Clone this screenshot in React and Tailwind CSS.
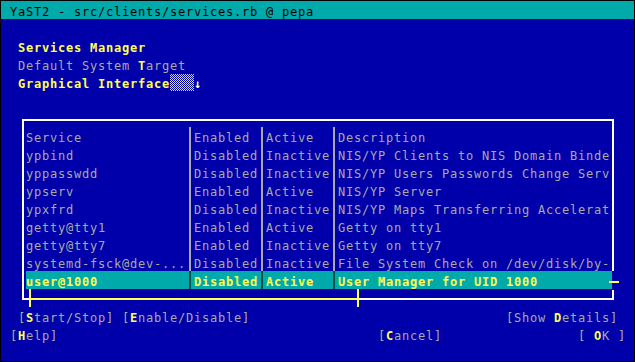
import React from "react";

const Y = "text-[#ffff55] font-bold";
const G = "text-[#aaaaaa]";

const rows = [
  ["Service", "Enabled", "Active", "Description"],
  ["ypbind", "Disabled", "Inactive", "NIS/YP Clients to NIS Domain Binde"],
  ["yppasswdd", "Disabled", "Inactive", "NIS/YP Users Passwords Change Serv"],
  ["ypserv", "Enabled", "Active", "NIS/YP Server"],
  ["ypxfrd", "Disabled", "Inactive", "NIS/YP Maps Transferring Accelerat"],
  ["getty@tty1", "Enabled", "Active", "Getty on tty1"],
  ["getty@tty7", "Enabled", "Inactive", "Getty on tty7"],
  ["systemd-fsck@dev-...", "Disabled", "Inactive", "File System Check on /dev/disk/by-"],
  ["user@1000", "Disabled", "Active", "User Manager for UID 1000"],
];

function Sep({ sel }) {
  return (
    <div className="w-[8px] h-[18px] flex">
      <div className={sel ? "ml-[3px] w-[2px] h-full bg-[#004a4a]" : "ml-[3px] w-[2px] h-full bg-[#aaaaaa]"} />
    </div>
  );
}

function Row({ cells, sel }) {
  const txt = sel ? Y : G;
  return (
    <div className={sel ? "flex h-[18px] leading-[22px] whitespace-pre bg-[#00aaaa]" : "flex h-[18px] leading-[22px] whitespace-pre"}>
      <div className={"w-[160px] " + txt}>{cells[0]}</div>
      <Sep sel={sel} />
      <div className={"w-[64px] " + txt}>{cells[1]}</div>
      <Sep sel={sel} />
      <div className={"w-[64px] " + txt}>{cells[2]}</div>
      <Sep sel={sel} />
      <div className={"w-[272px] " + txt}>{cells[3]}</div>
    </div>
  );
}

export default function App() {
  return (
    <div className="w-[635px] h-[362px] bg-black pt-[1px] pl-[1px] font-['DejaVu_Sans_Mono',monospace] text-[12px] tracking-[0.776px]">
      <div className="w-[633px] h-[360px] bg-[#0000aa] flex flex-col">
        {/* title */}
        <div className="h-[18px] leading-[22px] bg-[#00aaaa] text-black pl-[9px] whitespace-pre">
          YaST2 - src/clients/services.rb @ pepa
        </div>
        <div className="h-[18px]" />
        <div className={"h-[18px] leading-[22px] pl-[17px] whitespace-pre " + Y}>Services Manager</div>
        <div className="h-[18px] leading-[22px] pl-[17px] whitespace-pre flex">
          <span className={G}>Default System </span>
          <span className={Y}>T</span>
          <span className={G}>arget</span>
        </div>
        <div className="h-[18px] leading-[22px] pl-[17px] whitespace-pre flex items-start">
          <span className={Y}>Graphical Interface</span>
          <div className="w-[24px] h-[17px] mt-[1px] bg-[repeating-conic-gradient(#d8d8e8_0_25%,#0000aa_0_50%)] bg-[length:2px_2px]" />
          <span className="text-[#ffffcc] font-bold">↓</span>
        </div>
        <div className="h-[18px]" />

        {/* frame with table */}
        <div className="h-[198px] pt-[10px] pl-[21px]">
          <div className="relative w-[592px] h-[181px] flex flex-col">
            <div className="h-[2px] bg-white" />
            <div className="flex h-[177px]">
              <div className="w-[2px] bg-white" />
              <div className="w-[588px] pt-[6px] pl-[2px] flex flex-col">
                {rows.map((r, i) => (
                  <Row key={i} cells={r} sel={i === rows.length - 1} />
                ))}
              </div>
              <div className="w-[2px] flex flex-col">
                <div className="h-[150px] bg-white" />
                <div className="h-[19px]" />
                <div className="h-[8px] bg-white" />
              </div>
            </div>
            <div className="flex h-[2px]">
              <div className="w-[7px] bg-white" />
              <div className="w-[330px] bg-[#ffff55]" />
              <div className="flex-1 bg-white" />
            </div>
            <div className="absolute left-[7px] top-[170px] w-[2px] h-[18px] bg-[#ffff55]" />
            <div className="absolute left-[335px] top-[170px] w-[2px] h-[18px] bg-[#ffff55]" />
            <div className="absolute left-[587px] top-[162px] w-[10px] h-[2px] bg-[#ffff55]" />
          </div>
        </div>

        {/* buttons */}
        <div className="h-[18px] leading-[22px] flex pl-[17px] pr-[16px] whitespace-pre">
          <span className={G}>[</span>
          <span className={Y}>S</span>
          <span className={G}>tart/Stop] [</span>
          <span className={Y}>E</span>
          <span className={G}>nable/Disable]</span>
          <span className={"ml-auto " + G}>[Show </span>
          <span className={Y}>D</span>
          <span className={G}>etails]</span>
        </div>
        <div className="h-[18px] leading-[22px] flex pl-[9px] pr-[8px] whitespace-pre">
          <span className={G}>[</span>
          <span className={Y}>H</span>
          <span className={G}>elp]</span>
          <span className={"ml-[320px] " + G}>[</span>
          <span className={Y}>C</span>
          <span className={G}>ancel]</span>
          <span className={"ml-auto " + G}>[ </span>
          <span className={Y}>O</span>
          <span className={G}>K ]</span>
        </div>
        <div className="h-[18px]" />
      </div>
    </div>
  );
}
